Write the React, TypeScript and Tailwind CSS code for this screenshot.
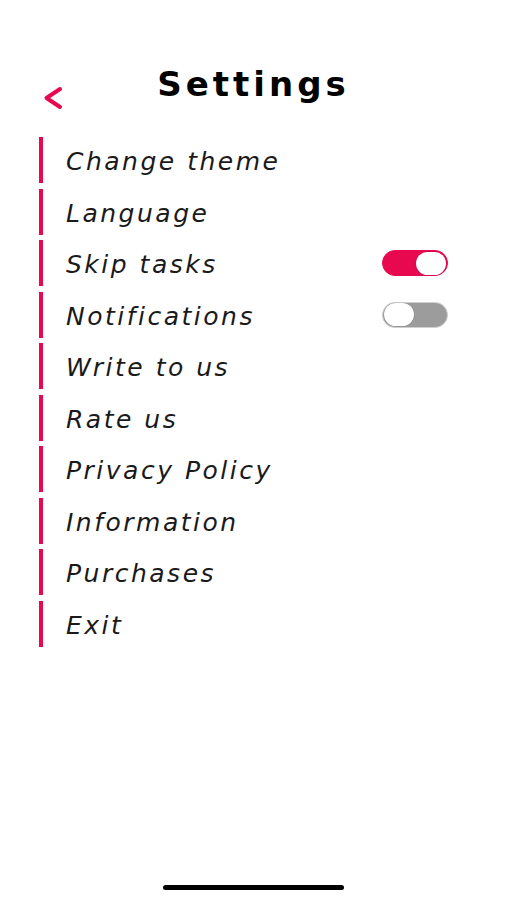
import { useState } from 'react';

const items = [
  'Change theme',
  'Language',
  'Skip tasks',
  'Notifications',
  'Write to us',
  'Rate us',
  'Privacy Policy',
  'Information',
  'Purchases',
  'Exit',
];

function Toggle({ on, onChange }: { on: boolean; onChange: () => void }) {
  return (
    <button
      onClick={onChange}
      className={`flex h-[26px] w-[66px] items-center rounded-full border p-[1px] ${
        on ? 'justify-end border-[#e8084f] bg-[#e8084f]' : 'justify-start border-[#cfcfcf] bg-[#9c9c9c]'
      }`}
    >
      <span className="block h-[23px] w-[30px] rounded-full bg-white shadow-[0_0_1px_rgba(0,0,0,0.4)]" />
    </button>
  );
}

export default function App() {
  const [toggles, setToggles] = useState<Record<string, boolean>>({
    'Skip tasks': true,
    Notifications: false,
  });

  return (
    <div className="flex h-[900px] w-full flex-col bg-white font-['DejaVu_Sans',sans-serif] text-[#1a1a1a]">
      <header className="grid grid-cols-[1fr_auto_1fr] items-start px-[41px] pt-[64px]">
        <button className="mt-[22px] flex h-[24px] w-[24px] items-center justify-center">
          <svg width="22" height="24" viewBox="0 0 22 24" fill="none">
            <path d="M18 3 L4.5 12 L18 21" stroke="#e8084f" strokeWidth="4" strokeLinecap="round" strokeLinejoin="round" />
          </svg>
        </button>
        <h1 className="text-[34px] font-bold leading-[40px] tracking-[4px] text-black">Settings</h1>
        <div />
      </header>

      <ul className="mt-[27px] flex flex-col gap-[5.5px] pl-[39px] pr-[59px]">
        {items.map((label) => (
          <li key={label} className="flex h-[46px] items-center border-l-[4px] border-[#e8084f] pl-[23px]">
            <span className="flex-1 pt-[4px] text-[25px] italic leading-[30px] tracking-[2.5px]">{label}</span>
            {label in toggles && (
              <Toggle
                on={toggles[label]}
                onChange={() => setToggles((t) => ({ ...t, [label]: !t[label] }))}
              />
            )}
          </li>
        ))}
      </ul>

      <div className="mt-auto flex justify-center pb-[10px]">
        <div className="h-[5px] w-[181px] rounded-full bg-black" />
      </div>
    </div>
  );
}
